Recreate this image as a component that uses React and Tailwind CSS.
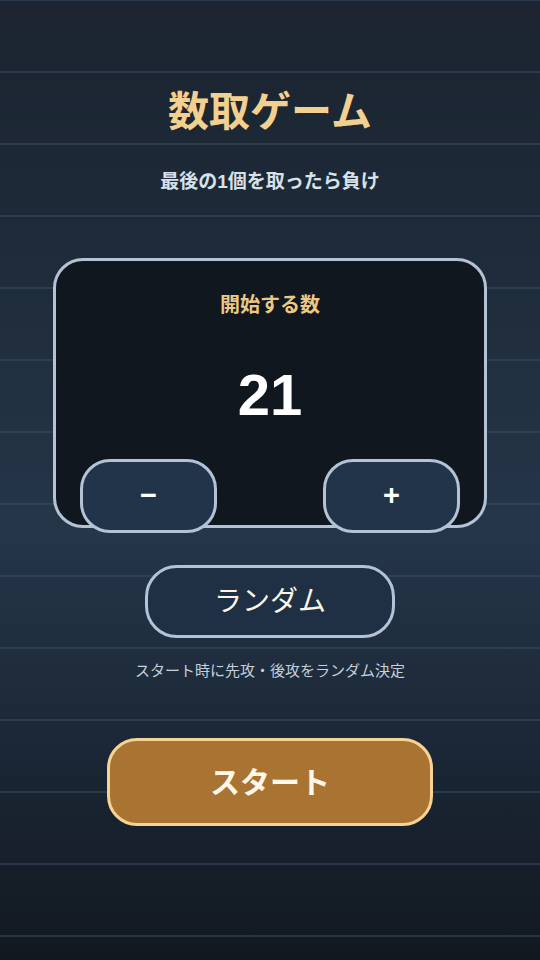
export default function App() {
  return (
    <div className="relative flex h-[960px] w-full flex-col items-center overflow-hidden font-['Liberation_Sans','Noto_Sans_CJK_JP',sans-serif] bg-[repeating-linear-gradient(to_bottom,rgba(58,78,102,0.5)_0_1px,transparent_1px_71px,rgba(58,78,102,0.5)_71px_72px),linear-gradient(to_bottom,#1b2430_0%,#1f2c3b_30%,#253649_55%,#1b2736_78%,#121820_100%)]">
      <h1 className="mt-[88px] h-[48px] text-[41px] leading-[48px] font-bold text-[#f3d08f]">数取ゲーム</h1>
      <p className="mt-[32px] h-[28px] text-[19px] leading-[28px] font-bold text-[#d6e1eb]">最後の1個を取ったら負け</p>

      <div className="mt-[62px] flex h-[270px] w-[434px] flex-col items-center rounded-[30px] border-[3px] border-[#b3c3d5] bg-[#10171e] px-[24px] pt-[30px]">
        <div className="h-[28px] text-[20px] leading-[28px] font-bold text-[#ecc886]">開始する数</div>
        <div className="mt-[47px] h-[58px] text-[58px] leading-none font-bold text-white">21</div>
        <div className="mt-[35px] flex w-full justify-between">
          <button className="flex h-[74px] w-[137px] shrink-0 items-center justify-center rounded-[30px] border-[3px] border-[#b3c3d5] bg-[#22344a] text-[29px] font-bold text-white">
            −
          </button>
          <button className="flex h-[74px] w-[137px] shrink-0 items-center justify-center rounded-[30px] border-[3px] border-[#b3c3d5] bg-[#22344a] text-[29px] font-bold text-white">
            +
          </button>
        </div>
      </div>

      <button className="mt-[37px] flex h-[73px] w-[250px] items-center justify-center rounded-[32px] border-[3px] border-[#b3c3d5] bg-[#1f3045] text-[28px] font-normal text-[#fdf6e6]">
        ランダム
      </button>
      <p className="mt-[23px] h-[20px] text-[15px] leading-[20px] text-[#c4d0dc]">スタート時に先攻・後攻をランダム決定</p>

      <button className="mt-[57px] flex h-[88px] w-[326px] items-center justify-center rounded-[30px] border-[3px] border-[#f4d393] bg-[#a97331] text-[30px] font-bold text-[#fff8ea]">
        スタート
      </button>
    </div>
  );
}
